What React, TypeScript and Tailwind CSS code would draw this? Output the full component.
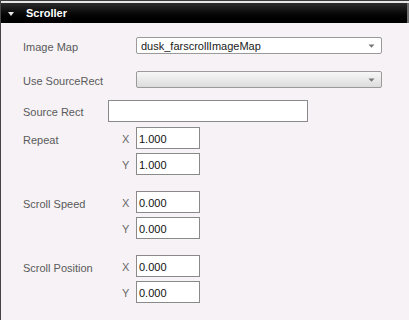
import React from "react";

function Arrow() {
  return (
    <svg width="7" height="4" viewBox="0 0 7 4" className="shrink-0">
      <path d="M0.5 0.5 L6.5 0.5 L3.5 3.8 Z" fill="#777" />
    </svg>
  );
}

function Select({ value, gradient }: { value: string; gradient?: boolean }) {
  return (
    <div
      className={
        "w-[246px] h-[17px] rounded-[2px] border border-[#9a9a9a] flex items-center pl-[4px] pr-[6px] " +
        (gradient ? "bg-gradient-to-b from-[#f7f7f7] to-[#dcdcdc]" : "bg-white")
      }
    >
      <span className="flex-1 text-[#1a1a1a] leading-none pt-[1px]">{value}</span>
      <Arrow />
    </div>
  );
}

function Input({ value, w }: { value: string; w: string }) {
  return (
    <div className={"h-[22px] border border-[#8a8a8a] bg-white flex items-center pl-[2px] pt-[2px] text-[#111] " + w}>
      {value}
    </div>
  );
}

function XYGroup({ label, x, y, mt }: { label: string; x: string; y: string; mt: string }) {
  return (
    <div className={"flex flex-col gap-[4px] " + mt}>
      <div className="flex items-center h-[22px]">
        <span className="w-[99px] text-[#5a5a5a] leading-[14px] pt-[3px]">{label}</span>
        <span className="w-[14px] text-[#6a6a6a] leading-[14px] pt-[2px]">X</span>
        <Input value={x} w="w-[64px]" />
      </div>
      <div className="flex items-center h-[22px]">
        <span className="w-[99px]" />
        <span className="w-[14px] text-[#6a6a6a] leading-[14px] pt-[2px]">Y</span>
        <Input value={y} w="w-[64px]" />
      </div>
    </div>
  );
}

export default function App() {
  return (
    <div className="w-[409px] h-[320px] overflow-hidden bg-[#f6f2f5] border-l border-[#444] font-['Liberation_Sans',Arial,sans-serif] text-[11px]">
      <div className="h-px bg-[#3d3d3d]" />
      <div className="h-[2px] bg-[#e6e6e6]" />
      <div className="h-[20px] flex items-center bg-gradient-to-b from-[#2c2c2c] to-[#000] border-r-2 border-[#707070]">
        <svg width="6" height="4" viewBox="0 0 6 4" className="ml-[7px] mt-[2px]">
          <path d="M0 0 L6 0 L3 4 Z" fill="#e8e8e8" />
        </svg>
        <span className="ml-[12px] font-bold text-white text-[11px]">Scroller</span>
      </div>
      <div className="pl-[22px]">
        <div className="flex items-center h-[17px] mt-[14px]">
          <span className="w-[113px] text-[#5a5a5a] leading-[14px] pt-[2px]">Image Map</span>
          <Select value="dusk_farscrollImageMap" />
        </div>
        <div className="flex items-center h-[17px] mt-[17px]">
          <span className="w-[113px] text-[#5a5a5a] leading-[14px] pt-[2px]">Use SourceRect</span>
          <Select value="" gradient />
        </div>
        <div className="flex items-center h-[22px] mt-[12px]">
          <span className="w-[85px] text-[#5a5a5a] leading-[14px] pt-[2px]">Source Rect</span>
          <Input value="" w="w-[200px]" />
        </div>
        <XYGroup label="Repeat" x="1.000" y="1.000" mt="mt-[5px]" />
        <XYGroup label="Scroll Speed" x="0.000" y="0.000" mt="mt-[16px]" />
        <XYGroup label="Scroll Position" x="0.000" y="0.000" mt="mt-[16px]" />
      </div>
    </div>
  );
}
